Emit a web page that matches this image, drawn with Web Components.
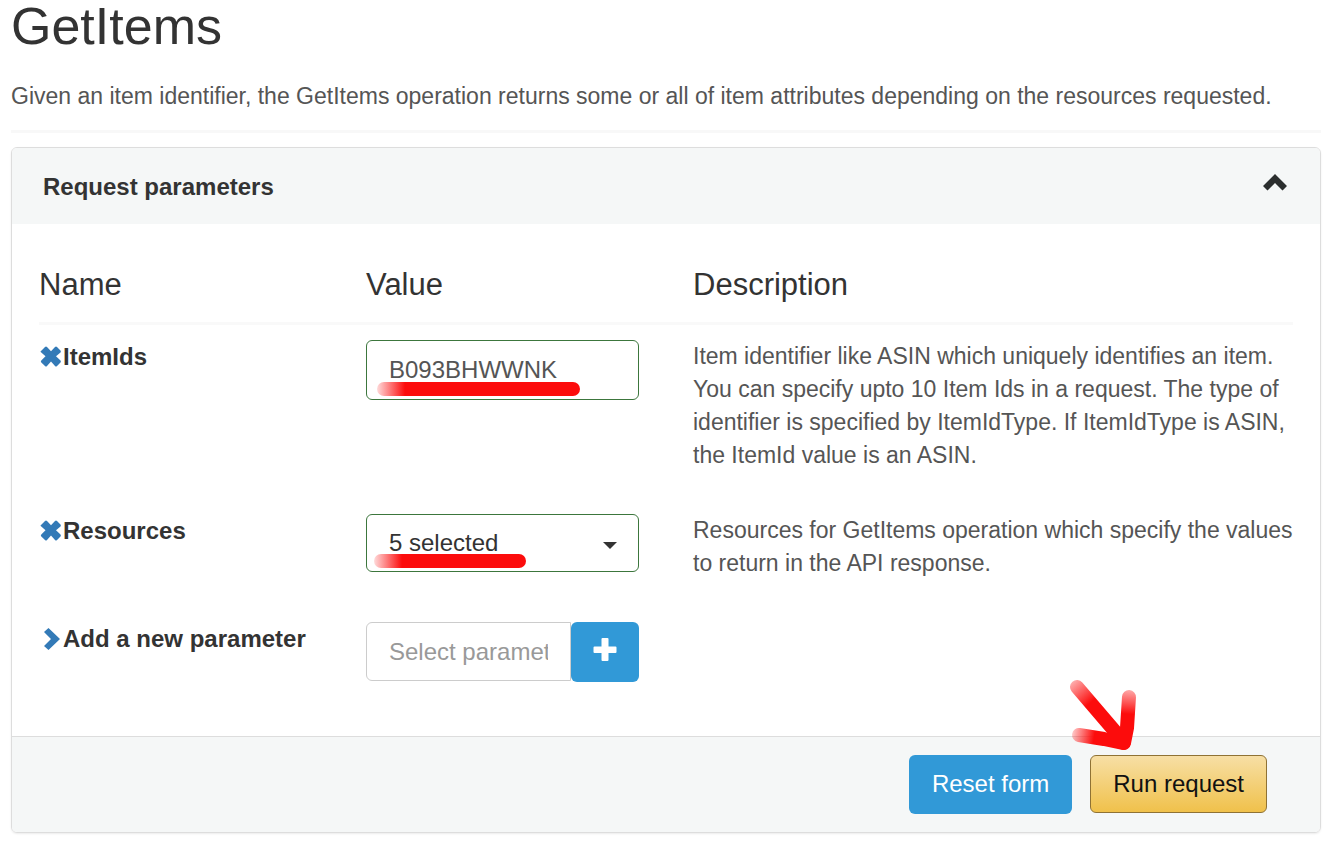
<!DOCTYPE html>
<html lang="en">
<head>
<meta charset="utf-8">
<title>GetItems</title>
<style>
  body {
    margin: 0;
    background: #fff;
    color: #333;
    font-family: "Liberation Sans", Arial, sans-serif;
    font-size: 23px;
    line-height: 33px;
  }
</style>
</head>
<body>

<api-operation name="GetItems">
  <span slot="summary">Given an item identifier, the GetItems operation returns some or all of item attributes depending on the resources requested.</span>
  <request-form></request-form>
</api-operation>

<template id="api-operation">
  <style>
    :host {
      display: block;
      padding: 0 8px 8px 11px;
    }
    h1 {
      margin: 0;
      font-size: 52px;
      font-weight: 400;
      line-height: 52px;
    }
    p {
      margin: 28px 0 0;
      color: #555;
    }
    hr {
      margin: 17px 0 14px;
      border: 0;
      border-top: 3px solid #f8f8f8;
    }
  </style>
  <h1></h1>
  <p><slot name="summary"></slot></p>
  <hr>
  <slot></slot>
</template>

<template id="fold-panel">
  <style>
    :host {
      display: block;
      border: 1px solid #ddd;
      border-radius: 6px;
      box-shadow: 0 1px 2px rgba(0, 0, 0, .08);
      overflow: hidden;
    }
    header {
      display: flex;
      align-items: center;
      justify-content: space-between;
      height: 76px;
      padding: 0 33px 0 31px;
      background: #f5f7f7;
    }
    h2 {
      margin: 0;
      font-size: 24px;
      font-weight: 700;
    }
    button {
      display: block;
      margin: 0;
      padding: 0 0 10px;
      border: 0;
      background: none;
      color: #2b2e2e;
      cursor: pointer;
    }
    .body {
      padding: 44px 27px 12px;
    }
    footer {
      display: flex;
      justify-content: flex-end;
      gap: 18px;
      padding: 18px 53px;
      border-top: 1px solid #ddd;
      background: #f5f7f7;
    }
    :host([folded]) .body,
    :host([folded]) footer {
      display: none;
    }
  </style>
  <header>
    <h2><slot name="title"></slot></h2>
    <button type="button" aria-label="Toggle"><glyph-icon name="up"></glyph-icon></button>
  </header>
  <div class="body"><slot></slot></div>
  <footer><slot name="actions"></slot></footer>
</template>

<template id="param-row">
  <style>
    :host {
      display: grid;
      grid-template-columns: repeat(4, minmax(0, 1fr));
      column-gap: 54px;
      padding-bottom: 42px;
    }
    .name {
      display: flex;
      align-items: flex-start;
      font-size: 24px;
      font-weight: 700;
      line-height: 34px;
    }
    .icon {
      display: block;
      width: 24px;
      flex: none;
    }
    .value {
      position: relative;
    }
    .text {
      grid-column: span 2;
      color: #555;
    }
    /* heading row */
    :host([heading]) {
      padding-bottom: 20px;
      margin-bottom: 15px;
      border-bottom: 3px solid #f9f9f9;
    }
    :host([heading]) .icon {
      display: none;
    }
    :host([heading]) .name,
    :host([heading]) .value,
    :host([heading]) .text {
      color: #333;
      font-size: 31px;
      font-weight: 400;
      line-height: 34px;
    }
  </style>
  <div class="name"><span class="icon"><slot name="icon"></slot></span><slot name="name"></slot></div>
  <div class="value"><slot name="value"></slot></div>
  <div class="text"><slot></slot></div>
</template>

<template id="select-box">
  <style>
    :host {
      display: block;
      position: relative;
    }
    svg {
      position: absolute;
      right: 22px;
      top: 28px;
      pointer-events: none;
    }
  </style>
  <slot></slot>
  <svg width="14" height="7" viewBox="0 0 14 7"><path d="M0 0H14L7 7Z" fill="#333"/></svg>
</template>

<template id="marker-line">
  <style>
    :host {
      display: block;
      position: absolute;
      height: 14px;
      border-radius: 7px;
      background: linear-gradient(90deg, rgba(252, 12, 12, .15), #fc0c0c 28px);
      pointer-events: none;
    }
  </style>
</template>

<template id="marker-arrow">
  <style>
    :host {
      display: block;
      position: absolute;
      width: 70px;
      height: 74px;
      pointer-events: none;
    }
    svg {
      display: block;
    }
  </style>
  <svg width="70" height="74" viewBox="0 0 70 74" fill="none" stroke-width="14" stroke-linecap="round" stroke-linejoin="round">
    <defs>
      <linearGradient id="a" gradientUnits="userSpaceOnUse" x1="3" y1="3" x2="22" y2="25"><stop stop-color="#fc0c0c" stop-opacity=".3"/><stop offset="1" stop-color="#fc0c0c"/></linearGradient>
      <linearGradient id="b" gradientUnits="userSpaceOnUse" x1="62" y1="10" x2="60" y2="36"><stop stop-color="#fc0c0c" stop-opacity=".3"/><stop offset="1" stop-color="#fc0c0c"/></linearGradient>
      <linearGradient id="c" gradientUnits="userSpaceOnUse" x1="2" y1="56" x2="26" y2="60"><stop stop-color="#fc0c0c" stop-opacity=".15"/><stop offset="1" stop-color="#fc0c0c"/></linearGradient>
    </defs>
    <path d="M9 9L56 64" stroke="url(#a)"/>
    <path d="M61 19L59 50L56 65" stroke="url(#b)"/>
    <path d="M11 57L36 61L55 65" stroke="url(#c)"/>
  </svg>
</template>

<template id="request-form">
  <style>
    :host {
      display: block;
    }
    input, select, button {
      box-sizing: border-box;
      margin: 0;
      font-family: inherit;
      font-size: 24px;
      line-height: 34px;
    }
    .control {
      display: block;
      width: 100%;
      height: 60px;
      padding: 0 22px;
      border: 1px solid #3c763d;
      border-radius: 6px;
      background: #fff;
      color: #555;
      outline: 0;
    }
    select.control {
      height: 58px;
      color: #333;
      appearance: none;
    }
    .group {
      display: flex;
      align-items: flex-start;
    }
    .group input {
      flex: 1;
      min-width: 0;
      height: 59px;
      border-color: #ccc;
      border-radius: 6px 0 0 6px;
    }
    input::placeholder {
      color: #999;
      opacity: 1;
    }
    .remove {
      display: block;
      padding: 0;
      border: 0;
      background: none;
      color: #337ab7;
      cursor: pointer;
    }
    .marker {
      color: #337ab7;
    }
    .btn {
      height: 59px;
      padding: 0 23px 2px;
      border: 0;
      border-radius: 6px;
      background: #3199d7;
      color: #fff;
      cursor: pointer;
    }
    .add {
      flex: none;
      display: grid;
      place-items: center;
      width: 68px;
      height: 60px;
      padding: 0 0 4px;
    }
    .run {
      height: 58px;
      padding: 0 22px;
      border: 1px solid #8f7234;
      background: linear-gradient(#f7dfa5, #f0c14b);
      color: #111;
    }
    .run-wrap {
      position: relative;
    }
    .ids-line {
      left: 11px;
      top: 42px;
      width: 203px;
    }
    .res-line {
      left: 8px;
      top: 40px;
      width: 152px;
    }
    marker-arrow {
      left: -22px;
      top: -77px;
    }
  </style>
  <fold-panel>
    <span slot="title">Request parameters</span>

    <param-row heading>
      <span slot="name">Name</span>
      <span slot="value">Value</span>
      Description
    </param-row>

    <param-row>
      <button slot="icon" class="remove" type="button" aria-label="Remove ItemIds"><glyph-icon name="remove"></glyph-icon></button>
      <label slot="name" for="item-ids">ItemIds</label>
      <input slot="value" class="control" id="item-ids" type="text" value="B093BHWWNK">
      <marker-line slot="value" class="ids-line"></marker-line>
      Item identifier like ASIN which uniquely identifies an item. You can specify upto 10 Item Ids in a request. The type of identifier is specified by ItemIdType. If ItemIdType is ASIN, the ItemId value is an ASIN.
    </param-row>

    <param-row>
      <button slot="icon" class="remove" type="button" aria-label="Remove Resources"><glyph-icon name="remove"></glyph-icon></button>
      <label slot="name" for="resources">Resources</label>
      <select-box slot="value">
        <select class="control" id="resources"><option>5 selected</option></select>
      </select-box>
      <marker-line slot="value" class="res-line"></marker-line>
      Resources for GetItems operation which specify the values to return in the API response.
    </param-row>

    <param-row>
      <glyph-icon slot="icon" class="marker" name="right"></glyph-icon>
      <label slot="name" for="new-param">Add a new parameter</label>
      <div slot="value" class="group">
        <input class="control" id="new-param" type="text" placeholder="Select parameter">
        <button class="btn add" type="button" aria-label="Add parameter"><glyph-icon name="plus"></glyph-icon></button>
      </div>
    </param-row>

    <button slot="actions" class="btn" type="button">Reset form</button>
    <div slot="actions" class="run-wrap">
      <button class="btn run" type="button">Run request</button>
      <marker-arrow></marker-arrow>
    </div>
  </fold-panel>
</template>

<script>

const ICONS = {
  up: '<path d="M0 17L12 5L24 17L19.500 21.500L12 14L4.500 21.500Z"/>',
  right: '<path d="M5 10L9.500 6L21 17L9.500 28L5 24L12 17Z"/>',
  remove: '<path d="M1.500 11.500L6 7Q7 6 8 7L12 11.300L16 7Q17 6 18 7L21.500 10.500Q22.300 11.500 21.500 12.500L17 16.300L21.500 20.500Q22.300 21.500 21.500 22.500L18 26Q17 27 16 26L12 21.500L8 26Q7 27 6 26L2.300 22.500Q1.300 21.500 2.300 20.500L6.500 16.300L2.300 12.500Q1.500 12 1.500 11.500Z"/>',
  plus: '<path d="M9.500 0H14.500Q15.500 0 15.500 1V8.500H22.500Q23.500 8.500 23.500 9.500V14Q23.500 15 22.500 15H15.500V22Q15.500 23 14.500 23H9.500Q8.500 23 8.500 22V15H1.500Q.5 15 .5 14V9.500Q.5 8.500 1.500 8.500H8.500V1Q8.500 0 9.500 0Z"/>'
};

//Stamps the template that has the element's own name
class TemplateElement extends HTMLElement {
  constructor() {
    super();
    const template = document.getElementById(this.localName);
    this.attachShadow({mode: 'open'}).appendChild(template.content.cloneNode(true));
  }
}

class GlyphIcon extends HTMLElement {
  constructor() {
    super();
    this.attachShadow({mode: 'open'});
  }

  connectedCallback() {
    const name = this.getAttribute('name');
    //row icons fill the label's line, the others are square
    const height = name === 'remove' || name === 'right' ? 34 : 24;
    this.shadowRoot.innerHTML = `
      <style>
        :host { display: block; }
        svg { display: block; fill: currentColor; }
      </style>
      <svg width="24" height="${height}" viewBox="0 0 24 ${height}" aria-hidden="true">${ICONS[name]}</svg>`;
  }
}

class ApiOperation extends TemplateElement {
  connectedCallback() {
    this.shadowRoot.querySelector('h1').textContent = this.getAttribute('name');
  }
}

class FoldPanel extends TemplateElement {
  constructor() {
    super();
    this.shadowRoot.querySelector('button').addEventListener('click', () => {
      this.toggleAttribute('folded');
    });
  }
}

class ParamRow extends TemplateElement {}
class SelectBox extends TemplateElement {}
class MarkerLine extends TemplateElement {}
class MarkerArrow extends TemplateElement {}
class RequestForm extends TemplateElement {}

customElements.define('glyph-icon', GlyphIcon);
customElements.define('api-operation', ApiOperation);
customElements.define('fold-panel', FoldPanel);
customElements.define('param-row', ParamRow);
customElements.define('select-box', SelectBox);
customElements.define('marker-line', MarkerLine);
customElements.define('marker-arrow', MarkerArrow);
customElements.define('request-form', RequestForm);

</script>
</body>
</html>
